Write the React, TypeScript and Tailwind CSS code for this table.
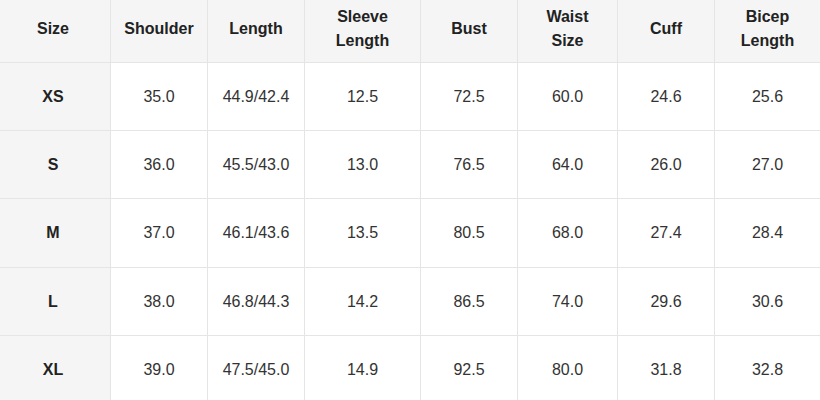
const headers = [
  ['Size'],
  ['Shoulder'],
  ['Length'],
  ['Sleeve', 'Length'],
  ['Bust'],
  ['Waist', 'Size'],
  ['Cuff'],
  ['Bicep', 'Length'],
]

const rows = [
  ['XS', '35.0', '44.9/42.4', '12.5', '72.5', '60.0', '24.6', '25.6'],
  ['S', '36.0', '45.5/43.0', '13.0', '76.5', '64.0', '26.0', '27.0'],
  ['M', '37.0', '46.1/43.6', '13.5', '80.5', '68.0', '27.4', '28.4'],
  ['L', '38.0', '46.8/44.3', '14.2', '86.5', '74.0', '29.6', '30.6'],
  ['XL', '39.0', '47.5/45.0', '14.9', '92.5', '80.0', '31.8', '32.8'],
]

const rowHeights = ['h-[68px]', 'h-[68px]', 'h-[69px]', 'h-[68px]', 'h-[68px]']

const cols = 'grid grid-cols-[111px_97px_97px_116px_97px_100px_97px_105px]'

export default function App() {
  return (
    <div className="w-[820px] h-[400px] overflow-hidden bg-white font-['Liberation_Sans',Arial,sans-serif] text-[16px] leading-6 text-[#333]">
      {/* Header */}
      <div className={`${cols} h-[63px] bg-[#f5f5f5] border-b border-[#e5e5e5]`}>
        {headers.map((h, i) => (
          <div
            key={i}
            className={`flex flex-col items-center justify-center pb-[4px] font-bold text-[#222] text-center ${i === 0 ? 'pr-[4px]' : ''} ${i < headers.length - 1 ? 'border-r border-[#e5e5e5]' : ''}`}
          >
            {h.map((line) => (
              <span key={line}>{line}</span>
            ))}
          </div>
        ))}
      </div>

      {/* Body */}
      {rows.map((row, r) => (
        <div key={row[0]} className={`${cols} ${rowHeights[r]} border-b border-[#e5e5e5]`}>
          {row.map((cell, i) => (
            <div
              key={i}
              className={`flex items-center justify-center text-center ${i === 0 ? 'bg-[#f5f5f5] pr-[4px] font-bold text-[#222]' : 'bg-white'} ${i < row.length - 1 ? 'border-r border-[#e5e5e5]' : ''}`}
            >
              {cell}
            </div>
          ))}
        </div>
      ))}
    </div>
  )
}
